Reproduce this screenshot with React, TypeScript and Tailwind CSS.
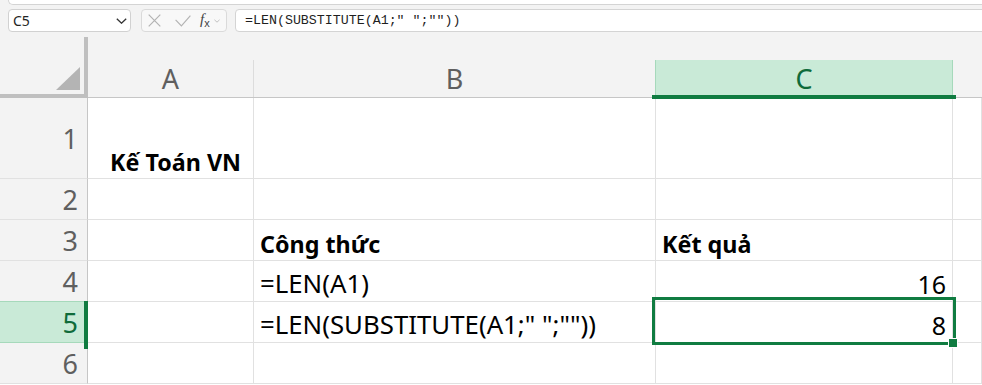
import React from 'react';

const grid = 'border-r border-b border-[#e1e1e1]';

function Chevron({ className = '' }: { className?: string }) {
  return (
    <svg className={className} width="11" height="6" viewBox="0 0 11 6" fill="none">
      <path d="M0.8 0.8 L5.5 5.2 L10.2 0.8" stroke="currentColor" strokeWidth="1.3" />
    </svg>
  );
}

type Row = {
  n: number;
  h: string;
  a?: React.ReactNode;
  b?: React.ReactNode;
  c?: React.ReactNode;
  active?: boolean;
};

const rows: Row[] = [
  { n: 1, h: 'h-[81px]', a: <span className="pl-[22px] font-bold text-[23.3px]">Kế Toán VN</span> },
  { n: 2, h: 'h-[41px]' },
  {
    n: 3,
    h: 'h-[41px]',
    b: <span className="pl-[6px] font-bold text-[23.3px]">Công thức</span>,
    c: <span className="pl-[6px] font-bold text-[23.3px]">Kết quả</span>,
  },
  {
    n: 4,
    h: 'h-[41px]',
    b: <span className="pl-[6px] text-[25.8px]">=LEN(A1)</span>,
    c: <span className="ml-auto pr-[6px] text-[25px]">16</span>,
  },
  {
    n: 5,
    h: 'h-[41px]',
    active: true,
    b: <span className="pl-[6px] text-[25.8px]">=LEN(SUBSTITUTE(A1;" ";""))</span>,
    c: <span className="ml-auto pr-[6px] text-[25px]">8</span>,
  },
  { n: 6, h: 'h-[41px]' },
];

export default function App() {
  return (
    <div className="relative w-[982px] h-[385px] overflow-hidden bg-white font-['Noto_Sans',sans-serif] text-black">
      {/* Formula bar */}
      <div className="h-[37px] bg-[#f3f3f3]">
        <div className="ml-[8px] h-[5px] bg-white border-l border-b border-[#d4d4d4] rounded-bl-[6px]" />
        <div className="mt-[4px] flex h-[23px] pl-[8px]">
          <div className="w-[123px] flex items-center justify-between bg-white border border-[#d1d1d1] rounded-[4px] pl-[4px] pr-[3px] text-[14px] text-[#242424]">
            <span>C5</span>
            <Chevron className="text-[#333]" />
          </div>
          <div className="ml-[10px] w-[86px] flex items-center bg-[#f8f8f8] border border-[#dadada] rounded-[4px] pl-[6px]">
            <svg width="13" height="13" viewBox="0 0 13 13" fill="none">
              <path d="M0.7 0.7 L12.3 12.3 M12.3 0.7 L0.7 12.3" stroke="#b3b3b3" strokeWidth="1.2" />
            </svg>
            <svg className="ml-[14px]" width="16" height="12" viewBox="0 0 16 12" fill="none">
              <path d="M0.6 4.8 L6.4 10.8 L15.4 0.6" stroke="#b3b3b3" strokeWidth="1.2" />
            </svg>
            <span className="ml-[9px] font-['Liberation_Serif',serif] italic text-[15px] leading-none text-[#444]">
              f<span className="text-[11px] not-italic font-['Liberation_Sans',sans-serif] align-[-3px]">x</span>
            </span>
            <Chevron className="ml-[4px] w-[6px] text-[#aaa]" />
          </div>
          <div className="ml-[8px] flex-1 -mr-[10px] flex items-center bg-white border border-[#d4d4d4] rounded-[4px] pl-[9px] font-['Liberation_Mono',monospace] text-[13.3px] text-[#1f1f1f]">
            =LEN(SUBSTITUTE(A1;" ";""))
          </div>
        </div>
      </div>

      {/* Column headers */}
      <div className="flex h-[61px] bg-[#f3f3f3]">
        <div className="w-[88px] flex items-end justify-end p-[4px] border-r-4 border-b-4 border-[#bfbfbf] box-border">
          <svg width="24" height="23" viewBox="0 0 24 23">
            <polygon points="24,0 24,23 0,23" fill="#b4b4b4" />
          </svg>
        </div>
        <div className="flex-1 flex flex-col">
          <div className="h-[23px]" />
          <div className="flex h-[38px] border-b border-[#c6c6c6] text-[27px] text-[#5f5f5f] leading-none">
            <div className="w-[166px] flex items-center justify-center border-r border-[#dcdcdc]">A</div>
            <div className="w-[402px] flex items-center justify-center border-r border-[#a6d9bb]">B</div>
            <div className="w-[297px] flex items-center justify-center bg-[#c9ead7] text-[#0f6b3a] border-r border-[#a6d9bb]">C</div>
            <div className="flex-1" />
          </div>
        </div>
      </div>

      {/* Rows */}
      {rows.map((r) => (
        <div key={r.n} className={`flex ${r.h}`}>
          <div
            className={`w-[88px] flex items-center justify-end pr-[9px] border-r border-r-[#c6c6c6] border-b text-[27px] leading-none ${
              r.active
                ? 'bg-[#c9ead7] text-[#0f6b3a] border-b-[#a6d9bb]'
                : r.n === 4
                  ? 'bg-[#f3f3f3] text-[#5f5f5f] border-b-[#a6d9bb]'
                  : 'bg-[#f3f3f3] text-[#5f5f5f] border-b-[#e1e1e1]'
            }`}
          >
            {r.n}
          </div>
          <div className={`w-[166px] flex items-end pb-[4px] leading-none ${grid}`}>{r.a}</div>
          <div className={`w-[402px] flex items-end pb-[4px] leading-none whitespace-nowrap ${grid}`}>{r.b}</div>
          <div className={`w-[297px] flex items-end pb-[4px] leading-none ${grid}`}>{r.c}</div>
          <div className={`flex-1 ${grid}`} />
        </div>
      ))}

      {/* Selection indicators */}
      <div className="absolute left-[652px] top-[95px] w-[304px] h-[4px] bg-[#107c41]" />
      <div className="absolute left-[84px] top-[301px] w-[4px] h-[48px] bg-[#107c41]" />
      <div className="absolute left-[652px] top-[297px] w-[304px] h-[48px] border-[3px] border-[#107c41]" />
      <div className="absolute left-[948px] top-[338px] w-[10px] h-[10px] bg-[#107c41] border border-white" />
    </div>
  );
}
